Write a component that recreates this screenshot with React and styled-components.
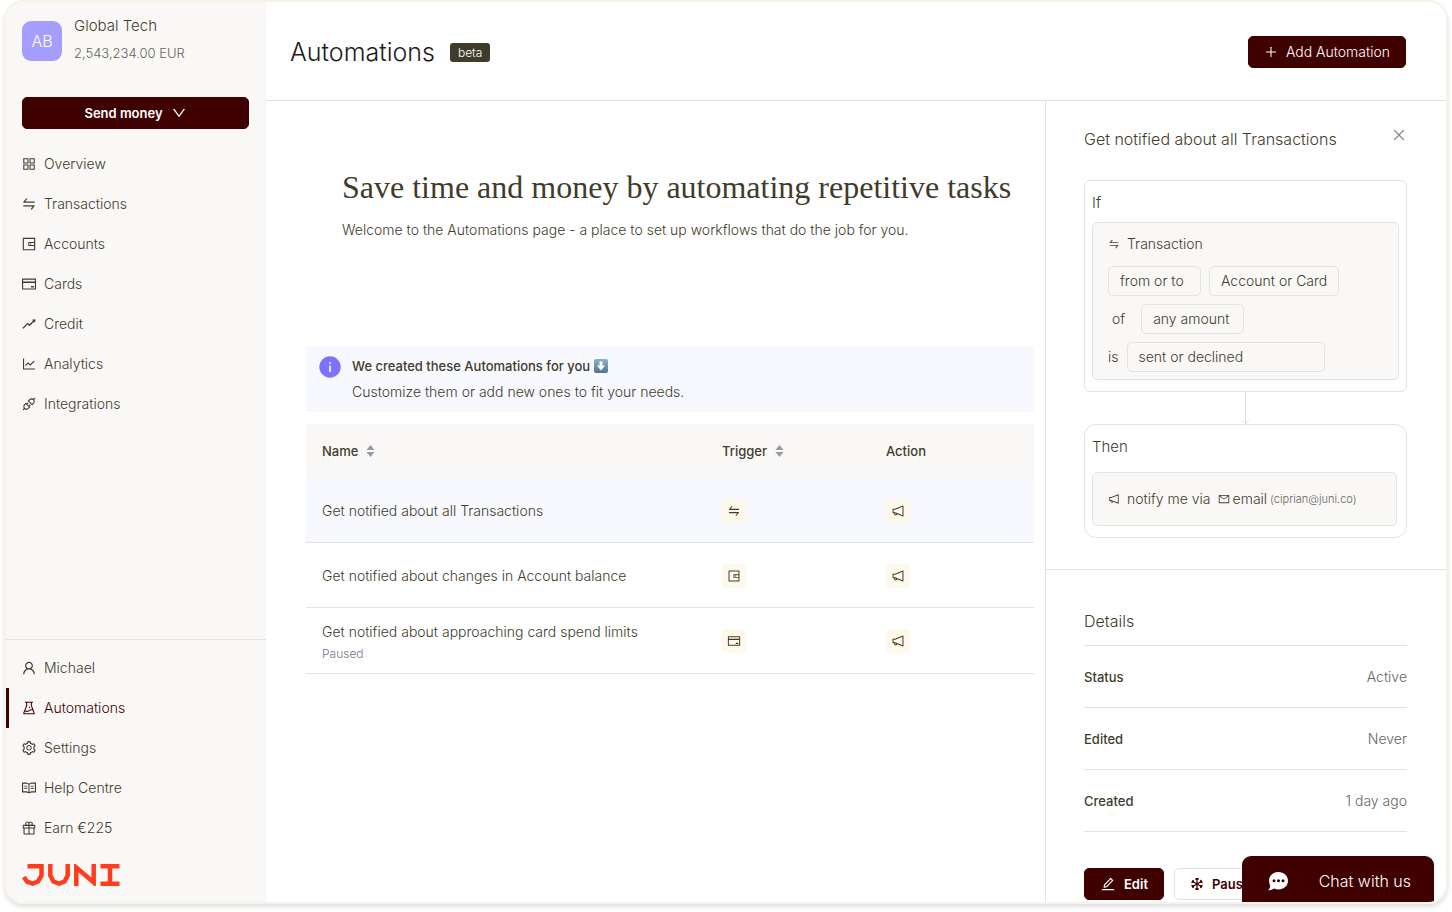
import React from 'react';
import styled, { createGlobalStyle, css } from 'styled-components';
import {
  AiOutlineApi,
  AiOutlineAppstore,
  AiOutlineClose,
  AiOutlineCreditCard,
  AiOutlineDown,
  AiOutlineEdit,
  AiOutlineExperiment,
  AiOutlineGift,
  AiOutlineLineChart,
  AiOutlineMail,
  AiOutlineNotification,
  AiOutlinePlus,
  AiOutlineRead,
  AiOutlineRise,
  AiOutlineSetting,
  AiOutlineSwap,
  AiOutlineUser,
  AiOutlineWallet,
} from 'react-icons/ai';

const color = {
  ink: '#3f3c2c',
  title: '#1c1c1a',
  muted: '#66655f',
  line: '#e3e3e1',
  sand: '#f9f8f6',
  wine: '#3f0000',
  lilac: '#a59eff',
  violet: '#7d72ff',
  mist: '#f8f9ff',
  cream: '#fff9ec',
  frame: '#f6f2e6',
};

const GlobalStyle = createGlobalStyle`
  *, *::before, *::after { box-sizing: border-box; }
  body {
    margin: 0;
    background: #ffffff;
    color: ${color.ink};
    font-family: Inter, "Liberation Sans", sans-serif;
    font-size: 14px;
    font-weight: 300;
    line-height: 24px;
  }
  h1, h2, h3, p, ul, dl, dd { margin: 0; padding: 0; }
  button { font: inherit; color: inherit; cursor: pointer; }
  svg { display: block; flex: none; }
`;

const Frame = styled.div`
  position: relative;
  display: grid;
  grid-template-columns: 260px minmax(0, 1fr);
  min-height: calc(100vh - 8px);
  margin: 0 4px 8px;
  border: 2px solid ${color.frame};
  border-radius: 20px;
  overflow: hidden;
  box-shadow: 0 3px 4px rgba(40, 40, 70, 0.14);
`;

/* Sidebar */

const Sidebar = styled.aside`
  display: flex;
  flex-direction: column;
  padding: 12px 0 16px;
  background: ${color.sand};
`;

const Profile = styled.div`
  display: flex;
  align-items: center;
  gap: 12px;
  padding: 0 16px;
`;

const Avatar = styled.div`
  width: 40px;
  height: 40px;
  border-radius: 9px;
  background: ${color.lilac};
  color: #ffffff;
  font-size: 16px;
  line-height: 40px;
  text-align: center;
`;

const CompanyName = styled.p`
  font-size: 15px;
  line-height: 24px;
`;

const Balance = styled.p`
  color: ${color.muted};
  font-size: 13px;
  line-height: 30px;
`;

const Button = styled.button`
  display: inline-flex;
  align-items: center;
  justify-content: center;
  gap: 8px;
  height: 32px;
  padding: 0 15px;
  border: 1px solid ${color.wine};
  border-radius: 5px;
  background: ${color.wine};
  color: #ffffff;
  font-size: ${(p) => (p.$regular ? '14px' : '13px')};
  font-weight: ${(p) => (p.$regular ? 300 : 600)};
  ${(p) =>
    p.$outline &&
    css`
      border-color: ${color.line};
      background: #ffffff;
      color: ${color.wine};
    `}
`;

const SendArea = styled.div`
  display: grid;
  padding: 29px 17px 15px 16px;
`;

const NavList = styled.ul`
  list-style: none;
`;

const NavLink = styled.a`
  display: flex;
  align-items: center;
  gap: 7px;
  height: 40px;
  padding-left: 12px;
  border-left: 3px solid ${(p) => (p.$active ? color.wine : 'transparent')};
  color: ${(p) => (p.$active ? color.wine : color.ink)};
  text-decoration: none;
`;

const SecondaryNav = styled.nav`
  margin-top: auto;
  padding-top: 8px;
  border-top: 1px solid ${color.line};
`;

const LogoLink = styled.a`
  align-self: flex-start;
  padding: 16px 16px 0;
`;

/* Header */

const Content = styled.div`
  display: flex;
  flex-direction: column;
  background: #ffffff;
`;

const Header = styled.header`
  display: flex;
  align-items: center;
  gap: 15px;
  height: 99px;
  padding: 2px 40px 0 24px;
  border-bottom: 1px solid ${color.line};
  ${Button} { margin-left: auto; }
`;

const PageTitle = styled.h1`
  color: ${color.title};
  font-size: 25px;
  font-weight: 300;
  line-height: 32px;
`;

const Tag = styled.span`
  padding: 0 8px;
  border-radius: 3px;
  background: ${color.ink};
  color: #ffffff;
  font-size: 12px;
  line-height: 19px;
`;

const Columns = styled.div`
  flex: 1;
  display: grid;
  grid-template-columns: minmax(0, 1fr) 401px;
`;

/* Main column */

const Main = styled.main`
  padding: 66px 11px 0 40px;
`;

const Hero = styled.section`
  padding: 0 0 104px 36px;
`;

const HeroTitle = styled.h2`
  margin-bottom: 11px;
  font-family: "Liberation Serif", serif;
  font-size: 32px;
  font-weight: 400;
  line-height: 40px;
  white-space: nowrap;
`;

const Banner = styled.section`
  display: flex;
  gap: 11px;
  margin-bottom: 12px;
  padding: 8px 13px;
  background: ${color.mist};
  > svg { margin-top: 2px; }
`;

const BannerTitle = styled.h3`
  display: flex;
  align-items: center;
  gap: 4px;
  margin-bottom: 2px;
  font-size: 13px;
  font-weight: 500;
`;

const Table = styled.table`
  width: 100%;
  border-collapse: separate;
  border-spacing: 0;
  table-layout: fixed;
`;

const HeadCell = styled.th`
  width: ${(p) => p.$width};
  height: 54px;
  padding: 0 16px;
  background: ${color.sand};
  font-size: 13px;
  font-weight: 500;
  text-align: left;
`;

const SortButton = styled.button`
  display: flex;
  align-items: center;
  gap: 8px;
  padding: 0;
  border: 0;
  background: none;
  font-weight: 500;
`;

const Row = styled.tr`
  background: ${(p) => (p.$selected ? color.mist : '#ffffff')};
`;

const Cell = styled.td`
  height: ${(p) => (p.$noted ? '66px' : '65px')};
  padding: ${(p) => (p.$noted ? '5px 16px 0' : '1px 16px 0')};
  border-bottom: 1px solid ${color.line};
  line-height: 22px;
`;

const RowNote = styled.p`
  color: #77758a;
  font-size: 12px;
`;

const Tile = styled.span`
  display: grid;
  place-items: center;
  width: 24px;
  height: 24px;
  border-radius: 4px;
  background: ${color.cream};
`;

/* Detail panel */

const Panel = styled.aside`
  border-left: 1px solid ${color.line};
`;

const PanelSection = styled.section`
  padding: ${(p) => p.$padding};
  & + & { border-top: 1px solid ${color.line}; }
`;

const PanelHead = styled.div`
  display: flex;
  align-items: flex-start;
  justify-content: space-between;
  margin-bottom: 29px;
`;

const PanelTitle = styled.h2`
  font-size: 16px;
  font-weight: 300;
  line-height: 24px;
`;

const CloseButton = styled.button`
  padding: 0;
  border: 0;
  background: none;
  color: #8e8d89;
  line-height: 0;
`;

const Step = styled.div`
  padding: ${(p) => p.$padding};
  border: 1px solid ${color.line};
  border-radius: ${(p) => p.$radius};
`;

const StepTitle = styled.h3`
  margin-bottom: ${(p) => p.$gap};
  font-size: 15px;
  font-weight: 300;
  line-height: 24px;
`;

const StepBody = styled.div`
  display: flex;
  flex-direction: column;
  gap: 8px;
  padding: ${(p) => p.$padding};
  border: 1px solid ${color.line};
  border-radius: 5px;
  background: ${color.sand};
`;

const Line = styled.div`
  display: flex;
  align-items: center;
  gap: ${(p) => p.$gap};
  padding-left: ${(p) => p.$indent || 0};
`;

const Subject = styled(Line)`
  padding-bottom: 2px;
`;

const Chip = styled.span`
  min-width: ${(p) => p.$width};
  padding: 0 11px;
  border: 1px solid ${color.line};
  border-radius: 5px;
  line-height: 28px;
`;

const Connector = styled.div`
  display: flex;
  justify-content: center;
`;

const Address = styled.small`
  color: ${color.muted};
  font-size: 11px;
`;

const Facts = styled.dl`
  margin-top: 12px;
  border-top: 1px solid ${color.line};
`;

const Fact = styled.div`
  display: flex;
  align-items: center;
  justify-content: space-between;
  height: 62px;
  border-bottom: 1px solid ${color.line};
`;

const FactName = styled.dt`
  font-size: 13px;
  font-weight: 500;
`;

const FactValue = styled.dd`
  color: ${color.muted};
`;

const Actions = styled.div`
  display: flex;
  gap: 10px;
  margin-top: 36px;
`;

const ChatButton = styled.button`
  position: absolute;
  right: 12px;
  bottom: 0;
  display: flex;
  align-items: center;
  justify-content: space-between;
  width: 192px;
  height: 46px;
  padding: 4px 23px 0 26px;
  border: 0;
  border-radius: 9px 9px 0 0;
  background: ${color.wine};
  color: #ffffff;
  font-size: 16px;
`;

/* Drawings */

const JuniLogo = () => (
  <svg width="98" height="22" viewBox="0 0 98 22" fill="none" stroke="#ff3d1c" strokeWidth="4.500" role="img" aria-label="Juni">
    <path d="M5.500 2.300H19.500V11.500L16 17.500L10.500 19.500L5 17.500L1.800 13" />
    <path d="M28.300 0V11.500L31.500 17.500L37 19.500L42.500 17.500L45.700 11.500V0" />
    <path d="M54.300 22V3.500L71.700 18.500V0" />
    <path d="M78.500 2.300H97.500M78.500 19.700H97.500M88 2.300V19.700" />
  </svg>
);

const InfoIcon = () => (
  <svg width="22" height="22" viewBox="0 0 22 22" aria-hidden="true">
    <circle cx="11" cy="11" r="10.700" fill={color.violet} />
    <path d="M11 9.500V16M11 6V7.800" stroke="#ffffff" strokeWidth="1.600" />
  </svg>
);

const DownArrowBadge = () => (
  <svg width="14" height="14" viewBox="0 0 14 14" aria-hidden="true">
    <defs>
      <linearGradient id="badge" x1="0" y1="0" x2="0" y2="1">
        <stop offset="0" stopColor="#8fb0c9" />
        <stop offset="1" stopColor="#4f7698" />
      </linearGradient>
    </defs>
    <rect width="14" height="14" rx="2" fill="url(#badge)" />
    <path d="M5.500 2.500H8.500V6.500H11L7 11.500L3 6.500H5.500Z" fill="#ffffff" />
  </svg>
);

const SortArrows = () => (
  <svg width="9" height="12" viewBox="0 0 9 12" fill="#9a99a6" aria-hidden="true">
    <path d="M4.500 0L8.500 5H0.500Z" />
    <path d="M4.500 12L8.500 7H0.500Z" />
  </svg>
);

const ArrowDownLine = () => (
  <svg width="9" height="32" viewBox="0 0 9 32" fill="none" stroke="#dededb" aria-hidden="true">
    <path d="M4.500 0V32M1 28.500L4.500 32L8 28.500" />
  </svg>
);

const SnowflakeIcon = () => (
  <svg width="14" height="14" viewBox="0 0 14 14" fill="none" stroke="currentColor" strokeWidth="1.300" aria-hidden="true">
    {[0, 60, 120, 180, 240, 300].map((angle) => (
      <path key={angle} transform={`rotate(${angle} 7 7)`} d="M7 7V1M5.400 1.500L7 3.100L8.600 1.500" />
    ))}
  </svg>
);

const ChatIcon = () => (
  <svg width="20" height="20" viewBox="0 0 20 20" aria-hidden="true">
    <path d="M10.500 1C15.800 1 20 4.900 20 9.800S15.800 18.600 10.500 18.600C8.900 18.600 7.500 18.300 6.200 17.600C4.600 18.800 2.500 19.400 0 19.200C1.300 18.200 2 16.800 2.200 14.700C1.400 13.300 1 11.600 1 9.800C1 4.900 5.200 1 10.500 1Z" fill="#ffffff" />
    <circle cx="6" cy="9.800" r="1.500" fill={color.wine} />
    <circle cx="10.500" cy="9.800" r="1.500" fill={color.wine} />
    <circle cx="15" cy="9.800" r="1.500" fill={color.wine} />
  </svg>
);

/* Data */

const primaryNav = [
  ['Overview', AiOutlineAppstore],
  ['Transactions', AiOutlineSwap],
  ['Accounts', AiOutlineWallet],
  ['Cards', AiOutlineCreditCard],
  ['Credit', AiOutlineRise],
  ['Analytics', AiOutlineLineChart],
  ['Integrations', AiOutlineApi],
];

const secondaryNav = [
  ['Michael', AiOutlineUser],
  ['Automations', AiOutlineExperiment],
  ['Settings', AiOutlineSetting],
  ['Help Centre', AiOutlineRead],
  ['Earn €225', AiOutlineGift],
];

const automations = [
  { name: 'Get notified about all Transactions', trigger: AiOutlineSwap, label: 'Transaction' },
  { name: 'Get notified about changes in Account balance', trigger: AiOutlineWallet, label: 'Account balance' },
  { name: 'Get notified about approaching card spend limits', trigger: AiOutlineCreditCard, label: 'Card', note: 'Paused' },
];

const facts = [
  ['Status', 'Active'],
  ['Edited', 'Never'],
  ['Created', '1 day ago'],
];

const NavItems = ({ items, active }) => (
  <NavList>
    {items.map(([label, Icon]) => (
      <li key={label}>
        <NavLink href="#" $active={label === active} aria-current={label === active ? 'page' : undefined}>
          <Icon size={16} />
          {label}
        </NavLink>
      </li>
    ))}
  </NavList>
);

export default function App() {
  return (
    <>
      <GlobalStyle />
      <Frame>
        <Sidebar>
          <Profile>
            <Avatar>AB</Avatar>
            <div>
              <CompanyName>Global Tech</CompanyName>
              <Balance>2,543,234.00 EUR</Balance>
            </div>
          </Profile>
          <SendArea>
            <Button type="button">
              Send money
              <AiOutlineDown size={16} />
            </Button>
          </SendArea>
          <nav aria-label="Main">
            <NavItems items={primaryNav} />
          </nav>
          <SecondaryNav aria-label="Account">
            <NavItems items={secondaryNav} active="Automations" />
          </SecondaryNav>
          <LogoLink href="#">
            <JuniLogo />
          </LogoLink>
        </Sidebar>

        <Content>
          <Header>
            <PageTitle>Automations</PageTitle>
            <Tag>beta</Tag>
            <Button type="button" $regular>
              <AiOutlinePlus size={14} />
              Add Automation
            </Button>
          </Header>

          <Columns>
            <Main>
              <Hero>
                <HeroTitle>Save time and money by automating repetitive tasks</HeroTitle>
                <p>Welcome to the Automations page - a place to set up workflows that do the job for you.</p>
              </Hero>

              <Banner>
                <InfoIcon />
                <div>
                  <BannerTitle>
                    We created these Automations for you
                    <DownArrowBadge />
                  </BannerTitle>
                  <p>Customize them or add new ones to fit your needs.</p>
                </div>
              </Banner>

              <Table>
                <thead>
                  <tr>
                    <HeadCell scope="col">
                      <SortButton type="button">
                        Name
                        <SortArrows />
                      </SortButton>
                    </HeadCell>
                    <HeadCell scope="col" $width="164px">
                      <SortButton type="button">
                        Trigger
                        <SortArrows />
                      </SortButton>
                    </HeadCell>
                    <HeadCell scope="col" $width="164px">Action</HeadCell>
                  </tr>
                </thead>
                <tbody>
                  {automations.map(({ name, trigger: Trigger, label, note }, i) => (
                    <Row key={name} $selected={i === 0}>
                      <Cell $noted={Boolean(note)}>
                        {name}
                        {note && <RowNote>{note}</RowNote>}
                      </Cell>
                      <Cell>
                        <Tile role="img" aria-label={label}>
                          <Trigger size={14} />
                        </Tile>
                      </Cell>
                      <Cell>
                        <Tile role="img" aria-label="Notification">
                          <AiOutlineNotification size={14} />
                        </Tile>
                      </Cell>
                    </Row>
                  ))}
                </tbody>
              </Table>
            </Main>

            <Panel>
              <PanelSection $padding="26px 39px 31px 38px">
                <PanelHead>
                  <PanelTitle>Get notified about all Transactions</PanelTitle>
                  <CloseButton type="button" aria-label="Close">
                    <AiOutlineClose size={16} />
                  </CloseButton>
                </PanelHead>
                <Step $padding="10px 7px 11px" $radius="6px">
                  <StepTitle $gap="7px">If</StepTitle>
                  <StepBody $padding="9px 15px 7px">
                    <Subject $gap="7px">
                      <AiOutlineSwap size={12} />
                      Transaction
                    </Subject>
                    <Line $gap="8px">
                      <Chip $width="93px">from or to</Chip>
                      <Chip $width="130px">Account or Card</Chip>
                    </Line>
                    <Line $gap="16px" $indent="4px">
                      of
                      <Chip $width="103px">any amount</Chip>
                    </Line>
                    <Line $gap="8px">
                      is
                      <Chip $width="198px">sent or declined</Chip>
                    </Line>
                  </StepBody>
                </Step>
                <Connector>
                  <ArrowDownLine />
                </Connector>
                <Step $padding="10px 9px 11px 7px" $radius="12px">
                  <StepTitle $gap="13px">Then</StepTitle>
                  <StepBody $padding="14px 15px">
                    <Line $gap="7px">
                      <AiOutlineNotification size={12} />
                      notify me via
                      <Line as="span" $gap="3px">
                        <AiOutlineMail size={12} />
                        email
                        <Address>(ciprian@juni.co)</Address>
                      </Line>
                    </Line>
                  </StepBody>
                </Step>
              </PanelSection>

              <PanelSection $padding="39px 39px 2px 38px">
                <PanelTitle>Details</PanelTitle>
                <Facts>
                  {facts.map(([name, value]) => (
                    <Fact key={name}>
                      <FactName>{name}</FactName>
                      <FactValue>{value}</FactValue>
                    </Fact>
                  ))}
                </Facts>
                <Actions>
                  <Button type="button">
                    <AiOutlineEdit size={16} />
                    Edit
                  </Button>
                  <Button type="button" $outline>
                    <SnowflakeIcon />
                    Pause
                  </Button>
                </Actions>
              </PanelSection>
            </Panel>
          </Columns>
        </Content>

        <ChatButton type="button">
          <ChatIcon />
          Chat with us
        </ChatButton>
      </Frame>
    </>
  );
}
